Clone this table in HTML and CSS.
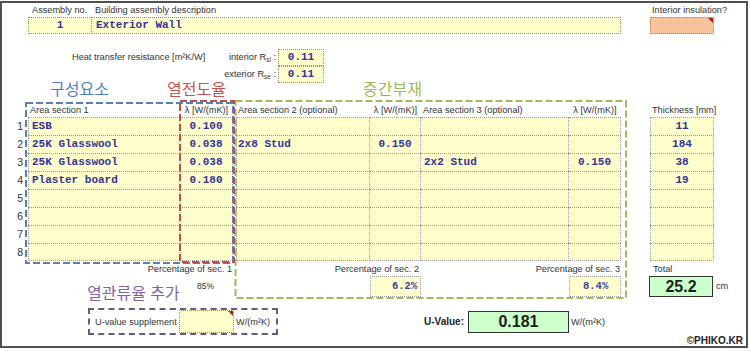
FILE: index.html
```html
<!DOCTYPE html>
<html lang="ko">
<head>
<meta charset="utf-8">
<title>U-Value</title>
<link rel="stylesheet" href="styles.css">
</head>
<body>
<div class="frame">
  <div class="head">
    <div class="lbl hno">Assembly no.</div>
    <div class="lbl hdesc">Building assembly description</div>
    <div class="lbl hins">Interior insulation?</div>
    <div class="box vno">1</div>
    <div class="box vdesc">Exterior Wall</div>
    <div class="box vins flag"></div>
  </div>

  <div class="res">
    <div class="res-title">Heat transfer resistance [m²K/W]</div>
    <div class="res-lbl row1">interior R<span class="sub">si</span> :</div>
    <div class="box rv row1">0.11</div>
    <div class="res-lbl row2">exterior R<span class="sub">se</span> :</div>
    <div class="box rv row2">0.11</div>
  </div>

  <div class="titles">
    <div class="kr blue">구성요소</div>
    <div class="kr red">열전도율</div>
    <div class="kr green">중간부재</div>
  </div>

  <div class="grid">
    <div class="h g2">Area section 1</div>
    <div class="h g3 ctr">λ [W/(mK)]</div>
    <div class="h g5">Area section 2 (optional)</div>
    <div class="h g6 ctr">λ [W/(mK)]</div>
    <div class="h g7">Area section 3 (optional)</div>
    <div class="h g8 ctr">λ [W/(mK)]</div>
    <div class="h g10">Thickness [mm]</div>

    <div class="rn">1</div>
    <div class="c g2 t">ESB</div><div class="c g3 n">0.100</div>
    <div class="c g5 t"></div><div class="c g6 n"></div>
    <div class="c g7 t"></div><div class="c g8 n"></div>
    <div class="c g10 n">11</div>

    <div class="rn">2</div>
    <div class="c g2 t">25K Glasswool</div><div class="c g3 n">0.038</div>
    <div class="c g5 t">2x8 Stud</div><div class="c g6 n">0.150</div>
    <div class="c g7 t"></div><div class="c g8 n"></div>
    <div class="c g10 n">184</div>

    <div class="rn">3</div>
    <div class="c g2 t">25K Glasswool</div><div class="c g3 n">0.038</div>
    <div class="c g5 t"></div><div class="c g6 n"></div>
    <div class="c g7 t">2x2 Stud</div><div class="c g8 n">0.150</div>
    <div class="c g10 n">38</div>

    <div class="rn">4</div>
    <div class="c g2 t">Plaster board</div><div class="c g3 n">0.180</div>
    <div class="c g5 t"></div><div class="c g6 n"></div>
    <div class="c g7 t"></div><div class="c g8 n"></div>
    <div class="c g10 n">19</div>

    <div class="rn">5</div>
    <div class="c g2 t"></div><div class="c g3 n"></div>
    <div class="c g5 t"></div><div class="c g6 n"></div>
    <div class="c g7 t"></div><div class="c g8 n"></div>
    <div class="c g10 n"></div>

    <div class="rn">6</div>
    <div class="c g2 t"></div><div class="c g3 n"></div>
    <div class="c g5 t"></div><div class="c g6 n"></div>
    <div class="c g7 t"></div><div class="c g8 n"></div>
    <div class="c g10 n"></div>

    <div class="rn">7</div>
    <div class="c g2 t"></div><div class="c g3 n"></div>
    <div class="c g5 t"></div><div class="c g6 n"></div>
    <div class="c g7 t"></div><div class="c g8 n"></div>
    <div class="c g10 n"></div>

    <div class="rn">8</div>
    <div class="c g2 t last"></div><div class="c g3 n last"></div>
    <div class="c g5 t last"></div><div class="c g6 n last"></div>
    <div class="c g7 t last"></div><div class="c g8 n last"></div>
    <div class="c g10 n last"></div>

    <div class="pl ps1">Percentage of sec. 1</div>
    <div class="pl ps2">Percentage of sec. 2</div>
    <div class="pl ps3">Percentage of sec. 3</div>
    <div class="pl ptot g10">Total</div>

    <div class="kr purple g2">열관류율 추가</div>
    <div class="p85 g3">85%</div>
    <div class="pv pv2 g6">6.2%</div>
    <div class="pv pv3 g8">8.4%</div>
    <div class="gbox tot g10">25.2</div>
    <div class="unit g11">cm</div>
  </div>

  <div class="bottom">
    <div class="supp">
      <span class="supp-lbl">U-value supplement</span>
      <div class="box sin flag"></div>
      <span class="supp-unit">W/(m²K)</span>
    </div>
    <div class="uv-lbl">U-Value:</div>
    <div class="gbox uv">0.181</div>
    <div class="uv-unit">W/(m²K)</div>
  </div>
  <div class="copy">©PHIKO.KR</div>

  <svg class="dash" width="744" height="343" viewBox="0 0 744 343" aria-hidden="true">
    <rect x="24" y="100" width="207" height="160" fill="none" stroke="#5b7fae" stroke-width="2" stroke-dasharray="7 3"/>
    <rect x="233.5" y="98" width="390.5" height="197" fill="none" stroke="#a3b860" stroke-width="2" stroke-dasharray="7 3"/>
    <rect x="178" y="98" width="54" height="161" fill="none" stroke="#c0504d" stroke-width="2" stroke-dasharray="7 3"/>
  </svg>
</div>
</body>
</html>
```

FILE: styles.css
```css
* { box-sizing: border-box; }
html, body { margin: 0; padding: 0; background: #fff; }
body {
  font-family: "Liberation Sans", Arial, sans-serif;
  font-size: 9.2px;
  color: #333;
}

.frame {
  position: relative;
  width: 748px;
  height: 347px;
  margin-top: 1px;
  border: 2px solid #505050;
  overflow: hidden;
}

/* ---------- header ---------- */
.head {
  display: grid;
  grid-template-columns: 26px 64px 529px 29px 64px;
  grid-template-rows: 13px 17px;
  padding-top: 1px;
}
.lbl { line-height: 13px; white-space: nowrap; }
.hno { grid-area: 1 / 2; padding-left: 4px; }
.hdesc { grid-area: 1 / 3; padding-left: 3px; }
.hins { grid-area: 1 / 5; padding-left: 2px; }

.box {
  background: #ffffcc;
  border: 1px dotted #8c8c8c;
  font-family: "Liberation Mono", "Courier New", monospace;
  font-weight: bold;
  font-size: 11px;
  color: #333399;
  white-space: nowrap;
}
.vno { grid-area: 2 / 2; text-align: center; line-height: 15px; }
.vdesc { grid-area: 2 / 3; border-left: none; padding-left: 4px; line-height: 15px; }
.vins { grid-area: 2 / 5; background: #f9c49c; position: relative; }
.flag { position: relative; }
.flag::after {
  content: "";
  position: absolute;
  top: 0;
  right: 0;
  border-top: 5px solid #a8231c;
  border-left: 5px solid transparent;
}

/* ---------- resistance ---------- */
.res {
  display: grid;
  grid-template-columns: 70px 150px 56px 46px;
  grid-template-rows: 17px 17px;
  margin-top: 15px;
}
.res-title { grid-area: 1 / 2; line-height: 17px; white-space: nowrap; }
.res-lbl {
  grid-column: 3;
  text-align: right;
  padding-right: 2px;
  line-height: 17px;
  white-space: nowrap;
}
.rv { grid-column: 4; text-align: center; line-height: 15px; }
.row1 { grid-row: 1; }
.row2 { grid-row: 2; }
.sub { font-size: 6.5px; position: relative; top: 2px; }

/* ---------- korean titles ---------- */
.titles {
  display: grid;
  grid-template-columns: 48px 117px 196px 1fr;
  margin-top: -4px;
}
.kr {
  font-family: "Noto Sans CJK KR", "Noto Sans", sans-serif;
  font-size: 16px;
  line-height: 18px;
  white-space: nowrap;
}
.titles .blue { grid-column: 2; color: #4f7fbd; }
.titles .red { grid-column: 3; color: #c9524e; }
.titles .green { grid-column: 4; color: #9bbb59; }

/* ---------- main grid ---------- */
.grid {
  display: grid;
  grid-template-columns: 26px 152px 53px 3px 134px 51px 148px 52px 29px 64px 1fr;
  grid-template-rows: 14px repeat(8, 18px) 15px 21px;
  margin-top: 6px;
}
.g2 { grid-column: 2; }
.g3 { grid-column: 3; }
.g5 { grid-column: 5; }
.g6 { grid-column: 6; }
.g7 { grid-column: 7; }
.g8 { grid-column: 8; }
.g10 { grid-column: 10; }
.g11 { grid-column: 11; }

.h { line-height: 14px; white-space: nowrap; padding-left: 2px; }
.h.ctr { text-align: center; padding-left: 0; }

.rn {
  grid-column: 1;
  text-align: right;
  padding-right: 5px;
  font-size: 10.5px;
  line-height: 18px;
}

.c {
  background: #ffffcc;
  border-top: 1px dotted #9a9a9a;
  border-right: 1px dotted #9a9a9a;
  font-family: "Liberation Mono", "Courier New", monospace;
  font-weight: bold;
  font-size: 11px;
  color: #333399;
  line-height: 17px;
  white-space: nowrap;
}
.c.t { padding-left: 3px; }
.c.n { text-align: center; }
.c.g2, .c.g5, .c.g10 { border-left: 1px dotted #9a9a9a; }
.c.g5.t { padding-left: 1px; }
.c.g7.t { padding-left: 3px; }
.c.last { border-bottom: 1px dotted #9a9a9a; }

.pl { line-height: 15px; padding-top: 1px; white-space: nowrap; }
.ps1 { grid-column: 2 / 4; text-align: right; padding-right: 1px; }
.ps2 { grid-column: 5 / 7; text-align: right; padding-right: 2px; }
.ps3 { grid-column: 7 / 9; text-align: right; padding-right: 1px; }
.ptot { padding-left: 3px; }

.purple {
  color: #8064a2;
  align-self: start;
  margin-top: 7px;
  margin-left: 59px;
}
.p85 { padding-left: 17px; line-height: 21px; font-size: 8.5px; }

.pv {
  background: #ffffcc;
  border: 1px dotted #9a9a9a;
  font-family: "Liberation Mono", "Courier New", monospace;
  font-weight: bold;
  font-size: 10.5px;
  color: #4040a0;
  line-height: 19px;
  white-space: nowrap;
}
.pv2 { padding-left: 21px; }
.pv3 { padding-left: 13px; }

.gbox {
  background: #ccffcc;
  border: 1px solid #333;
  font-weight: bold;
  font-size: 16px;
  text-align: center;
  color: #1e1e1e;
}
.tot { line-height: 19px; margin-left: -1px; margin-right: 1px; }
.unit { padding-left: 2px; line-height: 21px; }

/* ---------- bottom ---------- */
.bottom {
  display: flex;
  align-items: center;
  height: 27px;
  margin-top: 11px;
  padding-left: 86px;
}
.supp {
  display: flex;
  align-items: center;
  width: 190px;
  height: 27px;
  border: 2px dashed #655b80;
  padding-left: 5px;
}
.supp-lbl { width: 84px; white-space: nowrap; }
.sin { width: 55px; height: 23px; }
.supp-unit { margin-left: 2px; white-space: nowrap; }
.uv-lbl {
  width: 44px;
  margin-left: 146px;
  font-weight: bold;
  font-size: 10px;
  color: #222;
  white-space: nowrap;
}
.uv { width: 101px; height: 22px; line-height: 20px; }
.uv-unit { margin-left: 2px; white-space: nowrap; }

.copy {
  text-align: right;
  padding-right: 3px;
  line-height: 11px;
  font-weight: bold;
  font-size: 10px;
  color: #222;
}

.dash {
  position: absolute;
  left: 0;
  top: 0;
  pointer-events: none;
}
```
